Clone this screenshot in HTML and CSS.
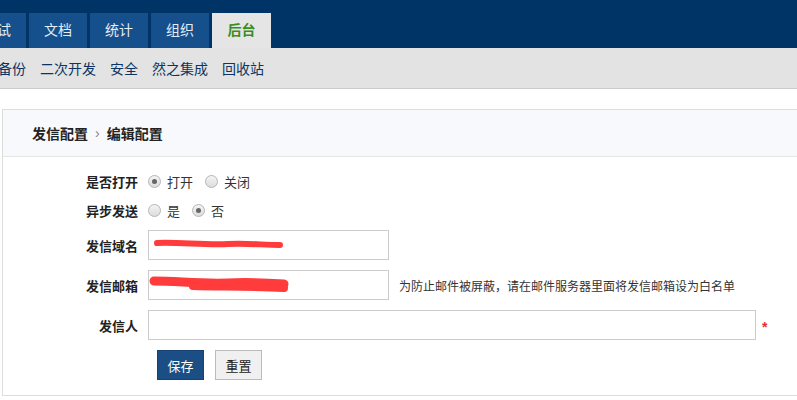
FILE: index.html
```html
<!DOCTYPE html>
<html lang="zh-CN">
<head>
    <meta charset="UTF-8">
    <title>发信配置 - 编辑配置</title>
    <link rel="stylesheet" href="styles.css">
</head>
<body>
    <header class="topbar">
        <nav class="tabs">
            <a class="tab">测试</a>
            <a class="tab">文档</a>
            <a class="tab">统计</a>
            <a class="tab">组织</a>
            <a class="tab active">后台</a>
        </nav>
    </header>
    <nav class="subnav">
        <a>备份</a>
        <a>二次开发</a>
        <a>安全</a>
        <a>然之集成</a>
        <a>回收站</a>
    </nav>

    <main class="main">
        <section class="panel">
            <div class="panel-head">
                <span>发信配置</span>
                <span class="sep">›</span>
                <span>编辑配置</span>
            </div>
            <form class="form">
                <label class="form-label">是否打开</label>
                <div class="radios">
                    <label><input type="radio" name="turnon" checked>打开</label>
                    <label><input type="radio" name="turnon">关闭</label>
                </div>

                <label class="form-label">异步发送</label>
                <div class="radios">
                    <label><input type="radio" name="async">是</label>
                    <label><input type="radio" name="async" checked>否</label>
                </div>

                <label class="form-label">发信域名</label>
                <div class="field">
                    <span class="masked">
                        <input type="text" class="input short">
                        <!-- redacted value -->
                        <svg class="scribble" width="240" height="30" viewBox="0 0 240 30">
                            <path d="M9 13 C30 12 55 15 80 14 C100 13 115 15 132 15" stroke="#ff3b3b" stroke-width="6" stroke-linecap="round" fill="none"/>
                        </svg>
                    </span>
                </div>

                <label class="form-label">发信邮箱</label>
                <div class="field">
                    <span class="masked">
                        <input type="text" class="input short">
                        <svg class="scribble" width="240" height="30" viewBox="0 0 240 30">
                            <path d="M6 11 C30 11 50 14 80 13 C100 12 120 13 136 14" stroke="#ff3b3b" stroke-width="9" stroke-linecap="round" fill="none"/>
                            <path d="M45 16 C70 17 100 16 136 18" stroke="#ff3b3b" stroke-width="8" stroke-linecap="round" fill="none"/>
                        </svg>
                    </span>
                    <span class="help">为防止邮件被屏蔽，请在邮件服务器里面将发信邮箱设为白名单</span>
                </div>

                <label class="form-label">发信人</label>
                <div class="field">
                    <input type="text" class="input long">
                    <span class="required">*</span>
                </div>

                <span></span>
                <div class="actions">
                    <button type="button" class="btn btn-primary">保存</button>
                    <button type="reset" class="btn">重置</button>
                </div>
            </form>
        </section>
    </main>
</body>
</html>
```

FILE: styles.css
```css
body {
    margin: 0;
    font-family: "Liberation Sans", "Noto Sans CJK SC", sans-serif;
    font-size: 14px;
    color: #333;
    background: #fff;
    overflow: hidden;
}
a {
    text-decoration: none;
    cursor: pointer;
}
.topbar {
    height: 48px;
    background-color: #003366;
    padding-top: 13px;
    box-sizing: border-box;
}
.tabs {
    display: flex;
    gap: 3px;
    margin-left: -32px;
}
.tab {
    width: 58px;
    height: 35px;
    line-height: 35px;
    text-align: center;
    background-color: #154f8c;
    color: #e4ecf4;
}
.tab.active {
    width: 59px;
    background-color: #e5e5e5;
    color: #3b8d1e;
    font-weight: bold;
}
.subnav {
    display: flex;
    height: 40px;
    align-items: center;
    background-color: #e3e3e3;
    border-bottom: 1px solid #cccccc;
    margin-left: -9px;
}
.subnav a {
    padding: 0 7px;
    color: #0d3462;
}
.main {
    padding: 20px 0 0 2px;
}
.panel {
    border: 1px solid #dddddd;
    border-right: none;
}
.panel-head {
    height: 46px;
    display: flex;
    align-items: center;
    gap: 7px;
    padding-left: 29px;
    background-color: #f8f9fc;
    border-bottom: 1px solid #e5e5e5;
    font-weight: bold;
    color: #222;
}
.panel-head .sep {
    color: #888;
    font-weight: normal;
}
.form {
    display: grid;
    grid-template-columns: 135px auto;
    column-gap: 10px;
    row-gap: 10px;
    align-items: center;
    padding: 15px 0 15px 0;
}
.form-label {
    text-align: right;
    font-weight: bold;
    color: #222;
    font-size: 13px;
}
.radios {
    display: flex;
    gap: 12px;
    height: 19px;
    align-items: center;
    font-size: 13px;
}
.radios label {
    display: flex;
    align-items: center;
}
.radios input {
    appearance: none;
    width: 13px;
    height: 13px;
    margin: 0 6px 0 0;
    border: 1px solid #b5b5b5;
    border-radius: 50%;
    background: linear-gradient(#f4f4f4, #dcdcdc);
    box-sizing: border-box;
    position: relative;
}
.radios input:checked::after {
    content: "";
    position: absolute;
    left: 3px;
    top: 3px;
    width: 5px;
    height: 5px;
    border-radius: 50%;
    background-color: #666;
}
.field {
    display: flex;
    align-items: center;
    gap: 10px;
}
.masked {
    position: relative;
    display: block;
    height: 30px;
}
.scribble {
    position: absolute;
    left: 0;
    top: 0;
    pointer-events: none;
}
.input {
    height: 30px;
    box-sizing: border-box;
    border: 1px solid #cccccc;
    padding: 4px 8px;
    font-size: 13px;
    display: block;
}
.input.short {
    width: 241px;
}
.input.long {
    width: 608px;
}
.help {
    font-size: 12px;
    color: #333;
}
.required {
    color: #e03030;
    font-weight: bold;
    font-size: 14px;
    margin-top: 4px;
    margin-left: -4px;
}
.actions {
    display: flex;
    gap: 11px;
    padding-left: 9px;
}
.btn {
    width: 47px;
    height: 30px;
    border: 1px solid #bbbbbb;
    background-color: #f0f0f0;
    color: #222;
    font-family: inherit;
    font-size: 13px;
    padding: 0;
    cursor: pointer;
}
.btn-primary {
    background-color: #1a4e85;
    border-color: #164273;
    color: #fff;
}
```
